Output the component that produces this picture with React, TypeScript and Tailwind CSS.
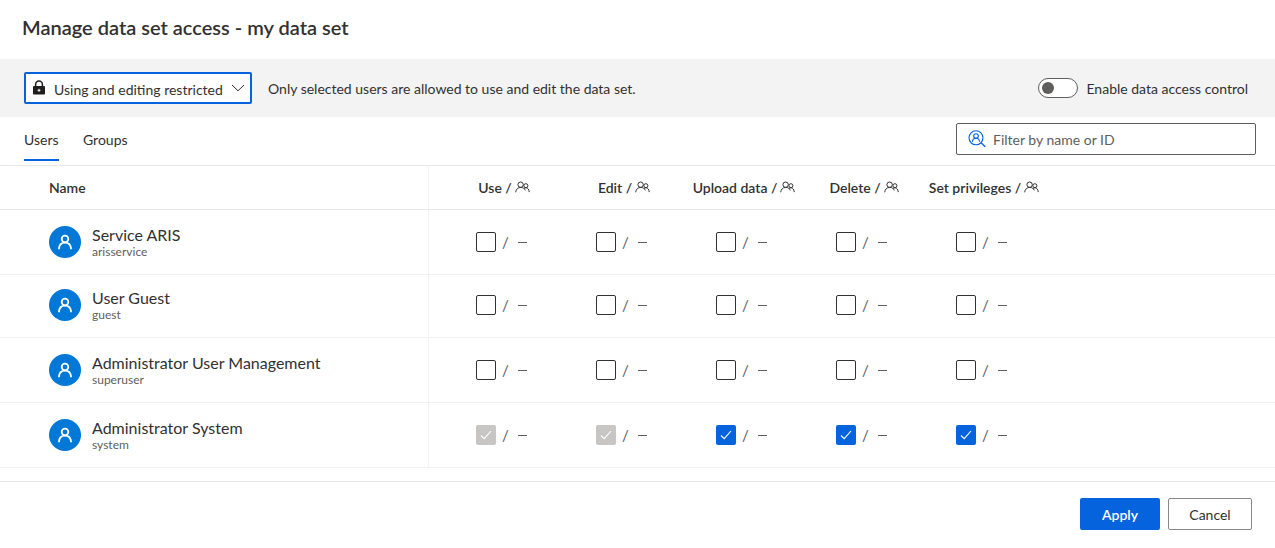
import React from "react";

type Permission = "off" | "on" | "locked";

interface UserRow {
  name: string;
  id: string;
  height: string;
  permissions: Permission[];
}

const columns = ["Use /", "Edit /", "Upload data /", "Delete /", "Set privileges /"];

const users: UserRow[] = [
  {
    name: "Service ARIS",
    id: "arisservice",
    height: "h-[65px]",
    permissions: ["off", "off", "off", "off", "off"],
  },
  {
    name: "User Guest",
    id: "guest",
    height: "h-[63px] pb-[2px]",
    permissions: ["off", "off", "off", "off", "off"],
  },
  {
    name: "Administrator User Management",
    id: "superuser",
    height: "h-[65px]",
    permissions: ["off", "off", "off", "off", "off"],
  },
  {
    name: "Administrator System",
    id: "system",
    height: "h-[65px]",
    permissions: ["locked", "locked", "on", "on", "on"],
  },
];

const LockIcon = () => (
  <svg width="12" height="15" viewBox="0 0 12 15" fill="none" className="-mt-0.5">
    <path d="M2.6 7V4.4a3.4 3.4 0 0 1 6.8 0V7" stroke="#201f1e" strokeWidth="1.5" />
    <rect x="0" y="6" width="12" height="8.6" rx="1" fill="#201f1e" />
    <path d="M6 8.8v3M4.5 10.3h3" stroke="#fff" strokeWidth="1" />
  </svg>
);

const ChevronIcon = () => (
  <svg width="14" height="8" viewBox="0 0 14 8" fill="none">
    <path d="M1 1l6 5.8L13 1" stroke="#323130" strokeWidth="1" />
  </svg>
);

const PeopleIcon = () => (
  <svg width="15" height="12" viewBox="0 0 15 12" fill="none" stroke="#323130" className="-mt-0.5">
    <circle cx="5.6" cy="3.7" r="2.7" />
    <path d="M.7 11.300C1 8.300 2.900 6.400 5.600 6.400s4 1.300 4.600 3" />
    <circle cx="10.900" cy="4.700" r="2" />
    <path d="M9 7.700c.5-.7 1.100-1 1.900-1 1.900 0 3.100 1.900 3.400 4.400" />
  </svg>
);

const SearchUserIcon = () => (
  <svg width="18" height="18" viewBox="0 0 18 18" fill="none" stroke="#0563de" strokeWidth="1.1">
    <circle cx="8" cy="7.800" r="7" />
    <path d="M13 12.800l4.300 4" strokeWidth="1.300" />
    <circle cx="8" cy="6" r="2.300" />
    <path d="M4.400 11.700c.2-2.200 1.600-3.400 3.600-3.400s3.400 1.200 3.600 3.400" />
  </svg>
);

const Avatar = () => (
  <div className="flex size-8 items-center justify-center rounded-full bg-[#0078d7]">
    <svg width="16" height="16" viewBox="0 0 16 16" fill="none" stroke="#fff" strokeWidth="1.800">
      <circle cx="8" cy="5" r="3.300" />
      <path d="M1.900 15.200c.2-3.900 2.600-6.500 6.100-6.500s5.900 2.600 6.100 6.500" />
    </svg>
  </div>
);

const boxStyles: Record<Permission, string> = {
  off: "border border-[#323130] bg-white",
  on: "bg-[#0563de]",
  locked: "bg-[#c8c6c4]",
};

const PermissionCell = ({ value }: { value: Permission }) => (
  <div className="flex w-[120px] items-center justify-center">
    <span className={`flex size-5 items-center justify-center rounded-[2px] ${boxStyles[value]}`}>
      {value !== "off" && (
        <svg width="12" height="10" viewBox="0 0 12 10" fill="none">
          <path d="M1 5.500l3.200 3.200L11 1" stroke="#fff" strokeWidth="1.100" />
        </svg>
      )}
    </span>
    <span className="w-[19px] pl-1.5 text-[15px] leading-5 text-[#605e5c]">/</span>
    <span className="flex w-[17px] pl-[3px]">
      <span className="h-px w-[9px] bg-[#605e5c]" />
    </span>
  </div>
);

const App = () => {
  return (
    <div className="flex h-[548px] w-[1275px] flex-col bg-white font-['Lato',sans-serif] text-sm text-[#323130]">
      <header className="flex h-[59px] items-center pb-1.5 pl-[22px]">
        <h1 className="text-xl leading-6 font-semibold">Manage data set access - my data set</h1>
      </header>

      <section className="flex h-[58px] items-center bg-[#f3f3f3] pr-[27px] pl-6">
        <button className="flex h-8 w-[228px] items-center rounded-[2px] border-2 border-[#0563de] bg-white pl-[7px]">
          <LockIcon />
          <span className="ml-[9px] w-[177px] pt-[3px] text-left whitespace-nowrap">Using and editing restricted</span>
          <ChevronIcon />
        </button>
        <p className="ml-4 pt-px whitespace-nowrap">Only selected users are allowed to use and edit the data set.</p>
        <div className="ml-auto flex items-center gap-2 whitespace-nowrap">
          <span className="flex h-5 w-10 items-center rounded-full border border-[#605e5c] bg-white pl-[3px]">
            <span className="size-3 rounded-full bg-[#605e5c]" />
          </span>
          <span className="pt-px">Enable data access control</span>
        </div>
      </section>

      <nav className="flex h-[49px] justify-between border-b border-[#e8e8e8] pr-[19px] pl-6">
        <div className="flex gap-6">
          <div className="h-11 w-[35px] border-b-2 border-[#0563de] pt-[13px] whitespace-nowrap">Users</div>
          <div className="h-11 pt-[13px]">Groups</div>
        </div>
        <div className="mt-1.5 flex h-8 w-[300px] items-center gap-[7px] rounded-[2px] border border-[#605e5c] pl-[11px] text-[#605e5c]">
          <SearchUserIcon />
          <span className="pt-px">Filter by name or ID</span>
        </div>
      </nav>

      <main className="h-[315px]">
        <div className="flex h-11 border-b border-[#e8e8e8] font-semibold">
          <div className="flex w-[429px] items-center border-r border-[#f3f2f1] pl-[49px]">Name</div>
          <div className="flex pl-[15px]">
            {columns.map((label) => (
              <div key={label} className="flex w-[120px] items-center justify-center gap-[3px] whitespace-nowrap">
                <span>{label}</span>
                <PeopleIcon />
              </div>
            ))}
          </div>
        </div>

        {users.map((user) => (
          <div key={user.id} className="border-b border-[#f3f2f1]">
            <div className={`-mb-px flex ${user.height}`}>
              <div className="flex w-[428px] items-center gap-[11px] pb-px pl-[49px]">
                <Avatar />
                <div>
                  <div className="-mt-px pb-px text-base leading-5">{user.name}</div>
                  <div className="text-xs leading-3 text-[#605e5c]">{user.id}</div>
                </div>
              </div>
              <div className="w-px bg-[#f3f2f1] shadow-none" />
              <div className="flex pb-px pl-[15px]">
                {user.permissions.map((value, index) => (
                  <PermissionCell key={index} value={value} />
                ))}
              </div>
            </div>
          </div>
        ))}
      </main>

      <footer className="flex h-[67px] gap-2 border-t border-[#e8e8e8] pt-4 pr-[23px]">
        <button className="ml-auto h-8 w-20 rounded-[2px] bg-[#0563de] pt-0.5 font-semibold text-white">Apply</button>
        <button className="h-8 w-[84px] rounded-[2px] border border-[#8a8886] pt-0.5">Cancel</button>
      </footer>
    </div>
  );
};

export default App;
